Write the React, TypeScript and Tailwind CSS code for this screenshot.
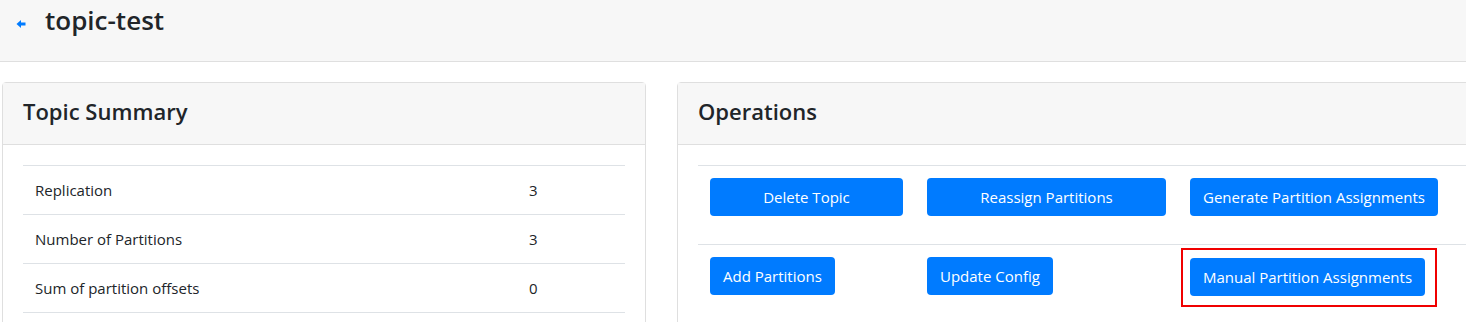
import { ReactNode } from 'react';

const font = { fontFamily: '"Open Sans", "Noto Sans", sans-serif' };

function Card({ title, width, children }: { title: string; width: string; children: ReactNode }) {
  return (
    <div className={`${width} shrink-0 rounded border border-[#dfdfdf] bg-white`}>
      <div className="flex h-[62px] items-center border-b border-[#dfdfdf] bg-[#f7f7f7] px-5 pb-[5px]">
        <h4 className="text-[22px] font-semibold text-[#212529]">{title}</h4>
      </div>
      <div className="px-5 pt-5 pb-10">{children}</div>
    </div>
  );
}

function Btn({ label, block }: { label: string; block?: boolean }) {
  return (
    <button className={`${block ? 'w-full' : ''} h-[38px] rounded bg-[#007bff] px-[13px] text-[15px] text-white`}>
      {label}
    </button>
  );
}

const summary = [
  { name: 'Replication', value: '3' },
  { name: 'Number of Partitions', value: '3' },
  { name: 'Sum of partition offsets', value: '0' },
];

export default function App() {
  return (
    <div className="h-[322px] w-[1466px] overflow-hidden bg-white text-[#212529]" style={font}>
      <div className="flex h-[62px] items-start border-b border-[#dfdfdf] bg-[#f7f7f7] pl-[16px] pt-[3px]">
        <svg width="10" height="10" viewBox="0 0 10 10" className="mt-[16px] mr-[19px]">
          <path d="M0.5 5 L5 1 L5 3.6 L9.5 3.6 L9.5 6.4 L5 6.4 L5 9 Z" fill="#007bff" />
        </svg>
        <h2 className="text-[26px] font-semibold leading-[34px]">topic-test</h2>
      </div>

      <div className="flex gap-[31px] pl-[2px] pt-5">
        <Card title="Topic Summary" width="w-[644px]">
          <table className="w-full border-t border-[#dee2e6] text-[15px]">
            <tbody>
              {summary.map((row) => (
                <tr key={row.name} className="h-[49px] border-b border-[#dee2e6]">
                  <td className="w-[494px] px-3">{row.name}</td>
                  <td className="px-3">{row.value}</td>
                </tr>
              ))}
            </tbody>
          </table>
        </Card>

        <Card title="Operations" width="w-[860px]">
          <table className="w-full table-fixed border-t border-[#dee2e6]">
            <tbody>
              <tr className="h-[79px] border-b border-[#dee2e6] align-top">
                <td className="w-[217px] px-3 pt-3"><Btn block label="Delete Topic" /></td>
                <td className="w-[263px] px-3 pt-3"><Btn block label="Reassign Partitions" /></td>
                <td className="px-3 pt-3"><Btn label="Generate Partition Assignments" /></td>
              </tr>
              <tr className="align-top">
                <td className="px-3 pt-3"><Btn label="Add Partitions" /></td>
                <td className="px-3 pt-3"><Btn label="Update Config" /></td>
                <td className="pt-[3px] pl-[3px]">
                  <div className="inline-block border-2 border-[#f00000] pt-2 pb-[9px] pl-[7px] pr-[10px]">
                    <Btn label="Manual Partition Assignments" />
                  </div>
                </td>
              </tr>
            </tbody>
          </table>
        </Card>
      </div>
    </div>
  );
}
